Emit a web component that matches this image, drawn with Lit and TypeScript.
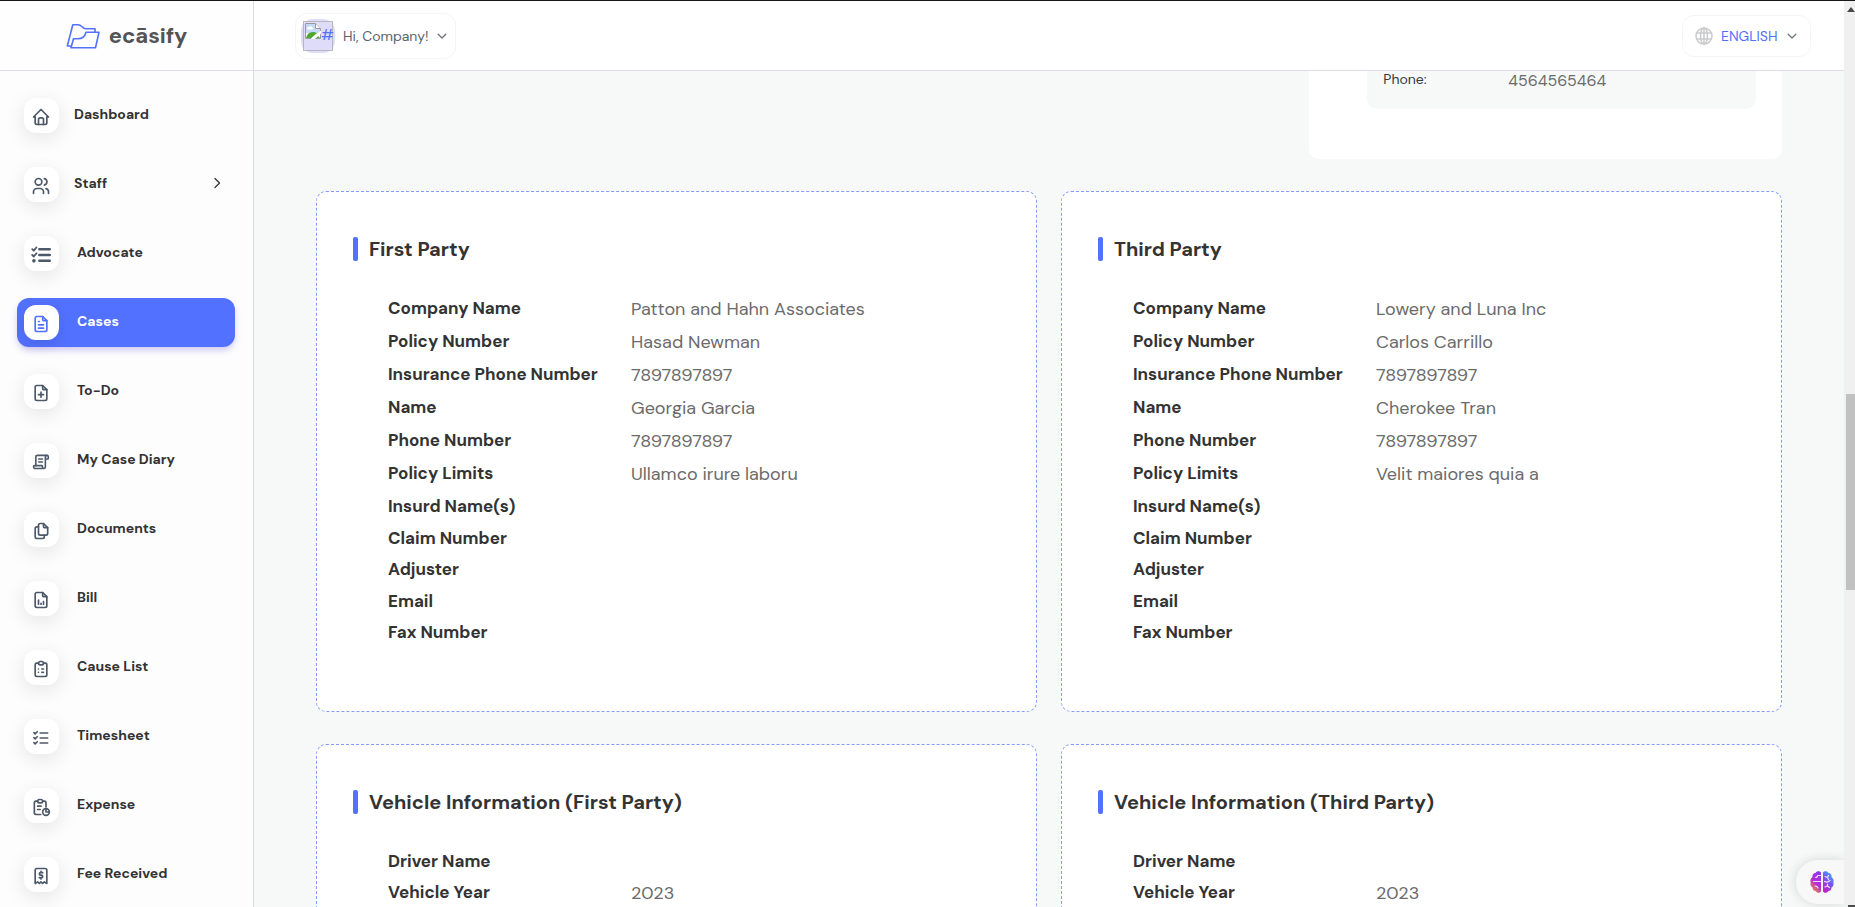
import { LitElement, html, css, svg, nothing } from "lit";
import { customElement, property } from "lit/decorators.js";
import { classMap } from "lit/directives/class-map.js";

type Row = [label: string, value?: string];

interface NavItem {
  label: string;
  icon: string;
  tight?: boolean;
  active?: boolean;
  expandable?: boolean;
}

const FILE_OUTLINE = svg`
  <path d="M14 3v4a1 1 0 0 0 1 1h4" />
  <path d="M17 21H7a2 2 0 0 1-2-2V5a2 2 0 0 1 2-2h7l5 5v11a2 2 0 0 1-2 2z" />`;

const CLIPBOARD = svg`
  <path d="M9 5H7a2 2 0 0 0-2 2v12a2 2 0 0 0 2 2h10a2 2 0 0 0 2-2V7a2 2 0 0 0-2-2h-2" />
  <rect x="9" y="3" width="6" height="4" rx="2" />`;

const ICONS: Record<string, unknown> = {
  home: svg`
    <path d="M5 12H3l9-9 9 9h-2" />
    <path d="M5 12v7a2 2 0 0 0 2 2h10a2 2 0 0 0 2-2v-7" />
    <path d="M9 21v-6a2 2 0 0 1 2-2h2a2 2 0 0 1 2 2v6" />`,
  users: svg`
    <circle cx="9" cy="7" r="4" />
    <path d="M3 21v-2a4 4 0 0 1 4-4h4a4 4 0 0 1 4 4v2" />
    <path d="M16 3.1a4 4 0 0 1 0 7.8" />
    <path d="M21 21v-2a4 4 0 0 0-3-3.9" />`,
  tasks: svg`
    <path d="M1.5 5l1.8 1.8L6.500 3M1.500 12l1.800 1.800L6.500 10" stroke-width="2.2" />
    <path d="M10 5h12.5M10 12h12.5M10 19h12.5" stroke-width="3" />
    <circle cx="3.5" cy="19" r="1.2" fill="currentColor" />`,
  fileText: svg`${FILE_OUTLINE}<path d="M9 9h1M9 13h6M9 17h6" />`,
  filePlus: svg`${FILE_OUTLINE}<path d="M12 11v6M9 14h6" />`,
  script: svg`
    <g transform="translate(1.4 1.4) scale(0.88)" stroke-width="2.2">
      <path d="M5 17V5a2 2 0 0 1 2-2h13" />
      <path d="M16 21H4a2 2 0 0 1-2-2v-1a1 1 0 0 1 1-1h10a1 1 0 0 1 1 1v1a2 2 0 1 0 4 0V5a2 2 0 1 1 4 0v2a1 1 0 0 1-1 1h-3" />
      <path d="M9 12h5M9 8h5" />
    </g>`,
  files: svg`
    <path d="M15 3v4a1 1 0 0 0 1 1h4" />
    <path d="M18 17h-7a2 2 0 0 1-2-2V5a2 2 0 0 1 2-2h4l5 5v7a2 2 0 0 1-2 2z" />
    <path d="M16 17v2a2 2 0 0 1-2 2H7a2 2 0 0 1-2-2V9a2 2 0 0 1 2-2h2" />`,
  fileChart: svg`${FILE_OUTLINE}<path d="M9 17v-5M12 17v-1M15 17v-3" />`,
  clipboardList: svg`${CLIPBOARD}<path d="M9 12h.01M13 12h2M9 16h.01M13 16h2" />`,
  listCheck: svg`
    <path d="M3.5 5.5L5 7l2.5-2.5M3.5 11.500L5 13l2.500-2.500M3.500 17.500L5 19l2.500-2.500" />
    <path d="M11 6h9M11 12h9M11 18h9" />`,
  report: svg`
    <path d="M8 5H6a2 2 0 0 0-2 2v12a2 2 0 0 0 2 2h5.7" />
    <path d="M18 12V7a2 2 0 0 0-2-2h-2" />
    <rect x="8" y="3" width="6" height="4" rx="2" />
    <circle cx="18" cy="18" r="4" />
    <path d="M18 14v4h4M8 11h4M8 15h3" />`,
  receipt: svg`
    <path d="M5 21V5a2 2 0 0 1 2-2h10a2 2 0 0 1 2 2v16l-3-2-2 2-2-2-2 2-2-2-3 2" />
    <path d="M14 8h-2.5a1.5 1.5 0 0 0 0 3h1a1.5 1.5 0 0 1 0 3H10M12 14v1.5M12 6.5V8" />`,
};

const NAV: NavItem[] = [
  { label: "Dashboard", icon: "home", tight: true },
  { label: "Staff", icon: "users", tight: true, expandable: true },
  { label: "Advocate", icon: "tasks" },
  { label: "Cases", icon: "fileText", active: true },
  { label: "To-Do", icon: "filePlus" },
  { label: "My Case Diary", icon: "script" },
  { label: "Documents", icon: "files" },
  { label: "Bill", icon: "fileChart" },
  { label: "Cause List", icon: "clipboardList" },
  { label: "Timesheet", icon: "listCheck" },
  { label: "Expense", icon: "report" },
  { label: "Fee Received", icon: "receipt" },
];

const party = (...values: string[]): Row[] => [
  ["Company Name", values[0]],
  ["Policy Number", values[1]],
  ["Insurance Phone Number", values[2]],
  ["Name", values[3]],
  ["Phone Number", values[4]],
  ["Policy Limits", values[5]],
  ["Insurd Name(s)"],
  ["Claim Number"],
  ["Adjuster"],
  ["Email"],
  ["Fax Number"],
];

const CARDS: { title: string; rows: Row[] }[] = [
  {
    title: "First Party",
    rows: party("Patton and Hahn Associates", "Hasad Newman", "7897897897", "Georgia Garcia", "7897897897", "Ullamco irure laboru"),
  },
  {
    title: "Third Party",
    rows: party("Lowery and Luna Inc", "Carlos Carrillo", "7897897897", "Cherokee Tran", "7897897897", "Velit maiores quia a"),
  },
  { title: "Vehicle Information (First Party)", rows: [["Driver Name"], ["Vehicle Year", "2023"]] },
  { title: "Vehicle Information (Third Party)", rows: [["Driver Name"], ["Vehicle Year", "2023"]] },
];

const chevron = (d: string) => html`
  <svg class="chevron" width="12" height="12" viewBox="0 0 12 12" fill="none" stroke="currentColor"
    stroke-width="1.3" stroke-linecap="round" stroke-linejoin="round" aria-hidden="true"><path d=${d} /></svg>`;
const DOWN = "M2.200 4.200L6 8l3.800-3.800";
const RIGHT = "M4 1.500L8.500 6 4 10.500";

@customElement("side-nav")
export class SideNav extends LitElement {
  static styles = css`
    :host { display: block; }
    .list { list-style: none; margin: 0; padding: 20px 18px 20px 17px; display: flex; flex-direction: column; gap: 20px; }
    .link {
      display: flex; align-items: center; gap: 18px; box-sizing: border-box; height: 49px; padding: 0 12px 0 7px;
      border-radius: 12px; color: #333; text-decoration: none; font-size: 14px; line-height: 20px; font-weight: 700;
    }
    .tight { gap: 15px; }
    .active { background: #5271ff; color: #fff; box-shadow: 0 4px 7px -1px rgba(90, 70, 220, 0.3); }
    .tile {
      display: flex; align-items: center; justify-content: center; box-sizing: border-box; flex: none;
      width: 35px; height: 35px; padding: 3px 1px 0 0; border-radius: 12px; background: #fff; color: #4d5969;
      box-shadow: 0 5px 20px rgba(0, 0, 0, 0.1);
    }
    .active .tile { color: #5271ff; box-shadow: 0 5px 14px rgba(0, 0, 0, 0.1); }
    .text { flex: 1; padding-bottom: 4px; }
    .chevron { padding-bottom: 4px; }
  `;

  render() {
    return html`
      <nav aria-label="Main">
        <ul class="list">
          ${NAV.map(
            (item) => html`
              <li>
                <a href="#" class=${classMap({ link: true, tight: !!item.tight, active: !!item.active })}
                  aria-current=${item.active ? "page" : nothing}>
                  <span class="tile">
                    <svg width="20" height="20" viewBox="0 0 24 24" fill="none" stroke="currentColor" stroke-width="2"
                      stroke-linecap="round" stroke-linejoin="round" aria-hidden="true">${ICONS[item.icon]}</svg>
                  </span>
                  <span class="text">${item.label}</span>
                  ${item.expandable ? chevron(RIGHT) : nothing}
                </a>
              </li>
            `,
          )}
        </ul>
      </nav>
    `;
  }
}

@customElement("top-bar")
export class TopBar extends LitElement {
  static styles = css`
    :host { display: flex; align-items: center; justify-content: space-between; padding: 0 33px 0 41px; background: #fff; }
    .pill {
      display: flex; align-items: center; box-sizing: border-box; border: 1px solid #f4f4f6; border-radius: 12px;
      background: #fff; color: #59636e; font: inherit; font-size: 14px; line-height: 20px;
    }
    .user { height: 46px; padding: 0 7px 0 5px; gap: 8px; }
    .avatar {
      display: flex; align-items: center; justify-content: center; width: 34px; height: 34px;
      border-radius: 12px; background: #dedcf8;
    }
    .missing {
      display: flex; box-sizing: border-box; width: 30px; height: 30px; padding: 1px; border: 1px solid #b8b8bc;
      color: #5271ff; font-size: 16px; line-height: 24px;
    }
    .missing svg { flex: none; }
    .language { height: 42px; padding: 0 12px; gap: 8px; }
    .select {
      appearance: none; margin: 0; padding: 0; border: 0; background: none; color: #5271ff;
      font: inherit; line-height: 20px; outline: none;
    }
    .chevron { color: #6b7480; }
  `;

  render() {
    return html`
      <button class="pill user" type="button" aria-haspopup="menu">
        <span class="avatar">
          <span class="missing">
            <svg width="16" height="16" viewBox="0 0 16 16" aria-hidden="true">
              <path d="M.5 .5h10l5 5v10H.5z" fill="#fff" stroke="#9a9a9e" />
              <path d="M1 1h9v5h5v4H1z" fill="#c3d9f7" />
              <path d="M2.500 6.500a1.500 1.500 0 0 1 1.500-2.500 2 2 0 0 1 3.500.5 1.200 1.200 0 0 1 0 2z" fill="#fff" />
              <path d="M1 15c1-4.500 4-6.500 8-6l3 1-5.500 5z" fill="#4ea72e" />
              <path d="M11 15l2-2 2 2z" fill="#4ea72e" />
              <path d="M5.500 16L16 7.500v3L9.500 16z" fill="#fff" />
              <path d="M10.500 .5v5h5" fill="#fff" stroke="#9a9a9e" />
            </svg><span>#</span>
          </span>
        </span>
        <span>Hi, Company!</span>
        ${chevron(DOWN)}
      </button>
      <label class="pill language">
        <svg width="18" height="18" viewBox="0 0 18 18" fill="none" stroke="#c9cacc" stroke-width="1.5" aria-hidden="true">
          <circle cx="9" cy="9" r="8" /><ellipse cx="9" cy="9" rx="3.5" ry="8" />
          <path d="M9 1v16M1.500 6h15M1.500 12h15" />
        </svg>
        <select class="select" aria-label="Language"><option>ENGLISH</option></select>
        ${chevron(DOWN)}
      </label>
    `;
  }
}

@customElement("detail-card")
export class DetailCard extends LitElement {
  @property() heading = "";
  @property({ attribute: false }) rows: Row[] = [];

  static styles = css`
    :host {
      display: block; box-sizing: border-box; padding: 45px 36px 59px; border: 1px dashed #859bff;
      border-radius: 10px; background: #fff;
    }
    .title { display: flex; gap: 11px; margin: 0 0 35px; color: #333; font-size: 20px; line-height: 24px; font-weight: 700; }
    .title::before { content: ""; width: 5px; border-radius: 2px; background: #5271ff; }
    .rows { margin: 0; padding-left: 35px; line-height: 1.5; }
    .row { display: grid; grid-template-columns: 243px 1fr; padding-bottom: 6px; }
    .label { color: #333; font-size: 17px; font-weight: 700; }
    .value { margin: 0; color: #6b6b6b; font-size: 18px; }
  `;

  render() {
    return html`
      <h2 class="title">${this.heading}</h2>
      <dl class="rows">
        ${this.rows.map(
          ([label, value]) => html`
            <div class="row">
              <dt class="label">${label}</dt>
              <dd class="value">${value ?? nothing}</dd>
            </div>
          `,
        )}
      </dl>
    `;
  }
}

@customElement("app-root")
export class AppRoot extends LitElement {
  static styles = css`
    :host {
      display: grid; grid-template-columns: 254px minmax(0, 1fr) 11px; grid-template-rows: 70px minmax(0, 1fr);
      box-sizing: border-box; height: 100vh; overflow: hidden; border-top: 1px solid #15151a;
      background: #f7f9f9; font-family: "DM Sans", Inter, "Open Sans", sans-serif;
    }
    .brand, .top { box-sizing: border-box; height: 70px; border-bottom: 1px solid #dcdce3; }
    .brand {
      display: flex; align-items: center; justify-content: center; gap: 9px; border-right: 1px solid #dcdce3;
      background: #fefefe; color: #535355; text-decoration: none; font-size: 22px; line-height: 28px; font-weight: 700;
    }
    .side { box-sizing: border-box; overflow: hidden; border-right: 1px solid #dcdce3; background: #fdfdfd; }
    .main { grid-column: 2; grid-row: 2; overflow: hidden; padding: 0 62px; display: flex; flex-direction: column; gap: 32px; }
    .summary { flex: none; display: grid; grid-template-columns: repeat(3, minmax(0, 1fr)); gap: 24px; }
    .contact { grid-column: 3; padding: 0 26px 50px 58px; border-radius: 0 0 10px 10px; background: #fff; }
    .facts { display: grid; grid-template-columns: 125px 1fr; margin: 0; padding: 0 16px 19px; border-radius: 0 0 10px 10px; background: #f7f9f9; }
    .fact-label { color: #333a42; font-size: 14px; line-height: 16px; }
    .fact-value { margin: 0; color: #6b6b6b; font-size: 16px; line-height: 19px; }
    .cards { flex: none; display: grid; grid-template-columns: repeat(2, minmax(0, 1fr)); gap: 32px 24px; }
    .scroll {
      grid-column: 3; grid-row: 1 / 3; display: flex; flex-direction: column; align-items: flex-end;
      overflow: hidden; background: #f0f0f0;
    }
    .arrow { width: 8px; height: 5px; margin: 6px 0; background: #4a4a4a; clip-path: polygon(50% 0, 100% 100%, 0 100%); }
    .arrow-down { width: 7px; height: 2px; background: #4a4a4a; }
    .track { flex: 1; display: grid; grid-template-rows: 376fr 196fr 315fr; width: 9px; }
    .thumb { grid-row: 2; background: #c1c1c1; }
    .assistant {
      position: absolute; right: 11px; bottom: 3px; display: flex; align-items: center; width: 48px; height: 44px;
      padding: 0 0 0 14px; border: 0; border-radius: 22px 0 0 22px; background: #f8f8f9; box-shadow: 0 0 12px rgba(0, 0, 0, 0.14);
      clip-path: inset(-20px 0 -20px -20px);
    }
  `;

  render() {
    return html`
      <a class="brand" href="#">
        <svg width="34" height="26" viewBox="0 0 34 26" fill="none" stroke="#5271ff" stroke-width="1.6"
          stroke-linejoin="round" aria-hidden="true">
          <path d="M5 23H1.300L6.800 1.800H12c4 0 4 4 8 4h9v3.400" />
          <path d="M5 24.700h24.500L33 9.300H20c-1 4-4 6.500-8 6.500H7.500z" />
        </svg>
        <span>ecāsify</span>
      </a>
      <top-bar class="top"></top-bar>
      <side-nav class="side"></side-nav>
      <main class="main">
        <section class="summary">
          <div class="contact">
            <dl class="facts">
              <dt class="fact-label">Phone:</dt>
              <dd class="fact-value">4564565464</dd>
            </dl>
          </div>
        </section>
        <section class="cards">
          ${CARDS.map((card) => html`<detail-card .heading=${card.title} .rows=${card.rows}></detail-card>`)}
        </section>
      </main>
      <div class="scroll" aria-hidden="true">
        <span class="arrow"></span>
        <div class="track"><div class="thumb"></div></div>
        <span class="arrow-down"></span>
      </div>
      <button class="assistant" type="button" aria-label="Assistant">
        <svg width="24" height="24" viewBox="0 0 24 24" aria-hidden="true">
          <defs>
            <linearGradient id="left" x1="0.7" y1="0" x2="0.2" y2="1">
              <stop offset="0" stop-color="#8a3df0" /><stop offset="0.5" stop-color="#b52bd6" /><stop offset="1" stop-color="#f59a2c" />
            </linearGradient>
            <linearGradient id="right" x1="0.8" y1="0" x2="0.3" y2="1">
              <stop offset="0" stop-color="#35b4ff" /><stop offset="0.5" stop-color="#7a55f2" /><stop offset="1" stop-color="#c41fc0" />
            </linearGradient>
          </defs>
          <path d="M11 2.500C10 .8 6.500 .6 5.500 3 3.500 3 2 5 2.500 7 .5 8.500 0 10.500 .6 12.500 0 15 1 17 2.500 17.500 2.500 20 4 21 5.500 21 7 23.500 10 23 11 21.500z" fill="url(#left)" />
          <path d="M13 2.500c1-1.700 4.500-1.900 5.500.5 2 0 3.500 2 3 4 2 1.500 2.500 3.500 1.900 5.500.6 2.500-.4 4.500-1.900 5 0 2.500-1.500 3.500-3 3.500-1.500 2.500-4.500 2-5.500.5z" fill="url(#right)" />
          <path d="M5.500 7.500c1.500 0 2-1 2-2M3.500 11.500H11M5 16c1.500 0 2.500.5 3 2M8 5.500h3M15 6.500l2.500 1 1-2M17.500 7.500l1 2M14.500 11.500c2 1 4 .5 5.500-1M15 17l2.500-1 2 1.500M17.500 16v-2"
            fill="none" stroke="#f1d9fb" stroke-width="1.2" stroke-linecap="round" />
        </svg>
      </button>
    `;
  }
}
